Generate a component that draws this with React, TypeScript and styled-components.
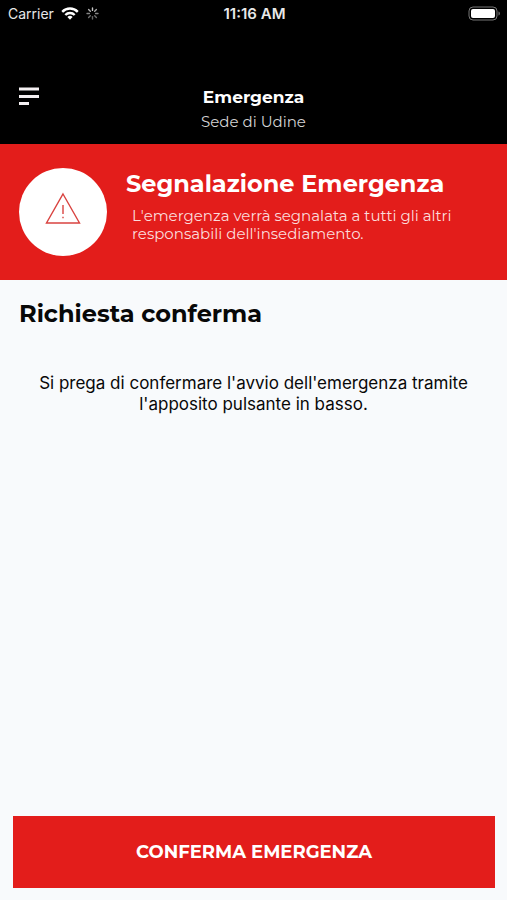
import React from "react";
import styled, { createGlobalStyle } from "styled-components";

const red = "#e31d1b";

const GlobalStyle = createGlobalStyle`
  *, *::before, *::after { box-sizing: border-box; }
  body { margin: 0; background: #f8fafc; font-family: Montserrat, Inter, sans-serif; }
  h1, h2, p { margin: 0; }
`;

const Screen = styled.div`
  display: flex;
  flex-direction: column;
  min-height: 100vh;
  background: #f8fafc;
`;

const StatusBar = styled.div`
  display: grid;
  grid-template-columns: 1fr auto 1fr;
  align-items: center;
  height: 28px;
  padding: 0 6px 0 8px;
  background: #000;
  color: #e8e8e8;
  font: 400 14px/20px Inter, sans-serif;
`;

const StatusGroup = styled.div<{ $end?: boolean }>`
  display: flex;
  align-items: center;
  justify-content: ${(p) => (p.$end ? "flex-end" : "flex-start")};
  gap: 7px;
  svg { display: block; }
`;

const Clock = styled.time`
  font-size: 15px;
  font-weight: 600;
`;

const Header = styled.header`
  display: grid;
  grid-template-columns: 48px 1fr 48px;
  align-items: start;
  padding: 58px 10px 10px;
  background: #000;
  color: #fff;
`;

const MenuButton = styled.button`
  display: grid;
  place-items: center;
  width: 38px;
  height: 20px;
  padding: 0;
  border: 0;
  background: none;
  cursor: pointer;
`;

const HeaderTitles = styled.div`
  text-align: center;
`;

const PageTitle = styled.h1`
  font-size: 17px;
  font-weight: 700;
  line-height: 22px;
`;

const PageSite = styled.p`
  padding-top: 2px;
  color: #d4d4d4;
  font-size: 15px;
  font-weight: 400;
  line-height: 24px;
`;

const Banner = styled.section`
  display: flex;
  align-items: flex-start;
  gap: 19px;
  padding: 24px 19px;
  background: ${red};
  color: #fff;
`;

const BannerIcon = styled.div`
  display: grid;
  flex: none;
  place-items: center;
  width: 88px;
  height: 88px;
  padding-bottom: 8px;
  border-radius: 50%;
  background: #fff;
`;

const BannerTitle = styled.h2`
  font-size: 24px;
  font-weight: 700;
  line-height: 32px;
`;

const BannerText = styled.p`
  max-width: 332px;
  padding: 7px 0 0 6px;
  color: #fbdcdb;
  font-size: 15px;
  font-weight: 400;
  line-height: 18px;
`;

const Content = styled.main`
  flex: 1;
  padding: 18px 19px;
  color: #080808;
`;

const SectionTitle = styled.h2`
  font-size: 24px;
  font-weight: 700;
  line-height: 32px;
`;

const Message = styled.p`
  max-width: 440px;
  margin: 43px auto 0;
  font: 400 17px/21px Inter, sans-serif;
  text-align: center;
`;

const Footer = styled.footer`
  padding: 0 12px 12px 13px;
`;

const ConfirmButton = styled.button`
  display: block;
  width: 100%;
  padding: 24px;
  border: 0;
  background: ${red};
  color: #fff;
  font-family: inherit;
  font-size: 18px;
  font-weight: 700;
  line-height: 24px;
  cursor: pointer;
`;

const WifiIcon = () => (
  <svg width="18" height="15" viewBox="0 0 18 15" fill="none" stroke="#fff" strokeWidth="2.4" aria-hidden="true">
    <path d="M1.2 4.8a11 11 0 0 1 15.6 0" />
    <path d="M4.3 8a6.6 6.6 0 0 1 9.4 0" />
    <path d="M9 12.8 6.4 10.1a3.7 3.7 0 0 1 5.2 0Z" fill="#fff" stroke="none" />
  </svg>
);

const spokes = [0.9, 0.75, 0.6, 0.5, 0.45, 0.5, 0.6, 0.8];

const SpinnerIcon = () => (
  <svg width="13" height="15" viewBox="0 0 13 15" stroke="#ddd" strokeWidth="1.4" strokeLinecap="round" aria-hidden="true">
    {spokes.map((opacity, i) => (
      <path key={i} d="M6.5 1v2.4" opacity={opacity} transform={`rotate(${i * 45} 6.5 6.5)`} />
    ))}
  </svg>
);

const BatteryIcon = () => (
  <svg width="33" height="17" viewBox="0 0 33 17" role="img" aria-label="Batteria carica">
    <rect x="1" y="1" width="28" height="13" rx="4" fill="none" stroke="#777" />
    <rect x="3" y="3" width="24" height="9" rx="2" fill="#fff" />
    <path d="M30.5 5.5c1.8.5 1.8 3.5 0 4Z" fill="#777" />
  </svg>
);

const MenuIcon = () => (
  <svg width="22" height="20" viewBox="0 0 22 20" stroke="#f4f0f2" strokeWidth="3" aria-hidden="true">
    <path d="M1 3h20M1 10.5h20M1 17.5h10" />
  </svg>
);

const WarningIcon = () => (
  <svg width="36" height="32" viewBox="0 0 36 32" fill="none" stroke="#d94340" strokeWidth="1.4" aria-hidden="true">
    <path d="M18 2 34.5 31h-33Z" />
    <path d="M18 13v9" />
    <path d="M18 24.7v1.6" />
  </svg>
);

export default function App() {
  return (
    <Screen>
      <GlobalStyle />
      <StatusBar>
        <StatusGroup>
          <span>Carrier</span>
          <WifiIcon />
          <SpinnerIcon />
        </StatusGroup>
        <Clock>11:16 AM</Clock>
        <StatusGroup $end>
          <BatteryIcon />
        </StatusGroup>
      </StatusBar>
      <Header>
        <MenuButton type="button" aria-label="Menu">
          <MenuIcon />
        </MenuButton>
        <HeaderTitles>
          <PageTitle>Emergenza</PageTitle>
          <PageSite>Sede di Udine</PageSite>
        </HeaderTitles>
      </Header>
      <Banner>
        <BannerIcon>
          <WarningIcon />
        </BannerIcon>
        <div>
          <BannerTitle>Segnalazione Emergenza</BannerTitle>
          <BannerText>L'emergenza verrà segnalata a tutti gli altri responsabili dell'insediamento.</BannerText>
        </div>
      </Banner>
      <Content>
        <SectionTitle>Richiesta conferma</SectionTitle>
        <Message>Si prega di confermare l'avvio dell'emergenza tramite l'apposito pulsante in basso.</Message>
      </Content>
      <Footer>
        <ConfirmButton type="button">CONFERMA EMERGENZA</ConfirmButton>
      </Footer>
    </Screen>
  );
}
